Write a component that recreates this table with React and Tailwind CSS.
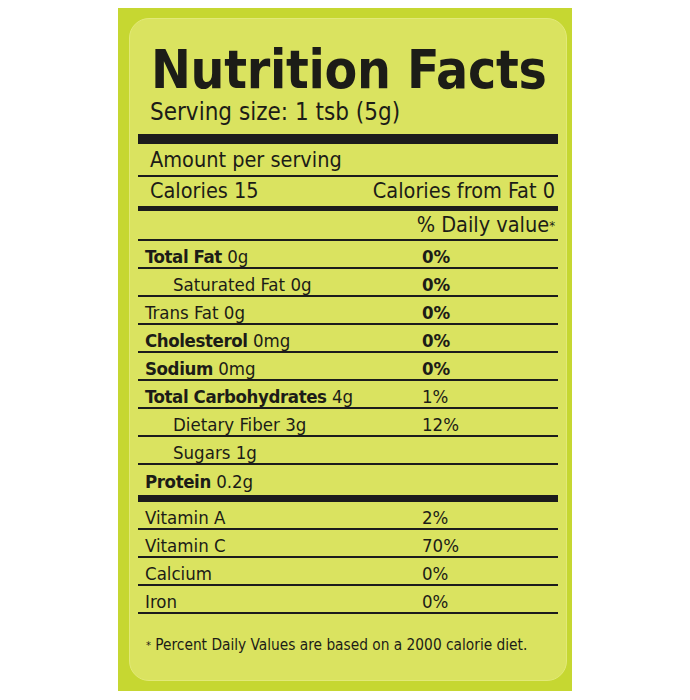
export default function App() {
  const rows = [
    { label: 'Total Fat', amount: '0g', dv: '0%', bold: true, dvBold: true },
    { label: 'Saturated Fat 0g', dv: '0%', indent: true, dvBold: true },
    { label: 'Trans Fat 0g', dv: '0%', dvBold: true },
    { label: 'Cholesterol', amount: '0mg', dv: '0%', bold: true, dvBold: true },
    { label: 'Sodium', amount: '0mg', dv: '0%', bold: true, dvBold: true },
    { label: 'Total Carbohydrates', amount: '4g', dv: '1%', bold: true },
    { label: 'Dietary Fiber 3g', dv: '12%', indent: true },
    { label: 'Sugars 1g', dv: '', indent: true },
  ]

  const vitamins = [
    { label: 'Vitamin A', dv: '2%' },
    { label: 'Vitamin C', dv: '70%' },
    { label: 'Calcium', dv: '0%' },
    { label: 'Iron', dv: '0%' },
  ]

  return (
    <div className="w-[690px] h-[700px] bg-white pt-[8px] pl-[118px] font-['DejaVu_Sans_Condensed','DejaVu_Sans',sans-serif] text-[#1c1c17]">
      <div className="w-[454px] h-[683px] bg-[#c6d731] pt-[10px] pb-[10px] pl-[11px] pr-[5px]">
        <div className="h-full rounded-[20px] bg-[#dae360] border border-[#e2e978] px-[8px]">
          {/* Title */}
          <h1 className="mt-[24px] pl-[13px] text-[53px] leading-[53px] font-bold whitespace-nowrap tracking-[-0.3px]">
            Nutrition Facts
          </h1>
          <p className="mt-[4px] pl-[12px] text-[24px] leading-[24px] whitespace-nowrap">Serving size: 1 tsb (5g)</p>

          <div className="mt-[10px] h-[10px] bg-[#1c1c1c]"></div>

          {/* Calories section */}
          <div className="h-[33px] border-b-2 border-[#1c1c1c] flex items-end pb-[5px] pl-[12px] text-[21.5px] leading-[21px]">
            Amount per serving
          </div>
          <div className="h-[29px] flex items-end justify-between pb-[5px] pl-[12px] pr-[3px] text-[21.5px] leading-[21px]">
            <span>Calories 15</span>
            <span>Calories from Fat 0</span>
          </div>
          <div className="h-[5px] bg-[#1c1c1c]"></div>
          <div className="h-[30px] border-b-2 border-[#1c1c1c] flex items-end justify-end pb-[4px] pr-[3px] text-[21.5px] leading-[21px]">
            <span>
              % Daily value<sup className="text-[13px] relative -top-[2px]">*</sup>
            </span>
          </div>

          {/* Nutrients */}
          {rows.map((row) => (
            <div
              key={row.label}
              className="h-[28px] border-b-2 border-[#1c1c1c] grid grid-cols-[284px_1fr] items-end pb-[1px] text-[18.5px] leading-[18px] whitespace-nowrap"
            >
              <span className={row.indent ? 'pl-[35px]' : 'pl-[7px]'}>
                {row.bold ? <b className="tracking-[-0.4px]">{row.label}</b> : row.label}
                {row.amount && ` ${row.amount}`}
              </span>
              <span className={row.dvBold ? 'font-bold' : ''}>{row.dv}</span>
            </div>
          ))}
          <div className="h-[30px] flex items-end pb-[4px] pl-[7px] text-[18.5px] leading-[18px]">
            <span>
              <b className="tracking-[-0.4px]">Protein</b> 0.2g
            </span>
          </div>
          <div className="h-[7px] bg-[#1c1c1c]"></div>

          {/* Vitamins */}
          {vitamins.map((v) => (
            <div
              key={v.label}
              className="h-[28px] border-b-2 border-[#1c1c1c] grid grid-cols-[284px_1fr] items-end pb-[1px] text-[18.5px] leading-[18px]"
            >
              <span className="pl-[7px]">{v.label}</span>
              <span>{v.dv}</span>
            </div>
          ))}

          <p className="mt-[24px] pl-[8px] text-[15.3px] leading-[15px] whitespace-nowrap">
            <sup className="text-[11px] relative -top-[1px]">*</sup> Percent Daily Values are based on a 2000 calorie diet.
          </p>
        </div>
      </div>
    </div>
  )
}
